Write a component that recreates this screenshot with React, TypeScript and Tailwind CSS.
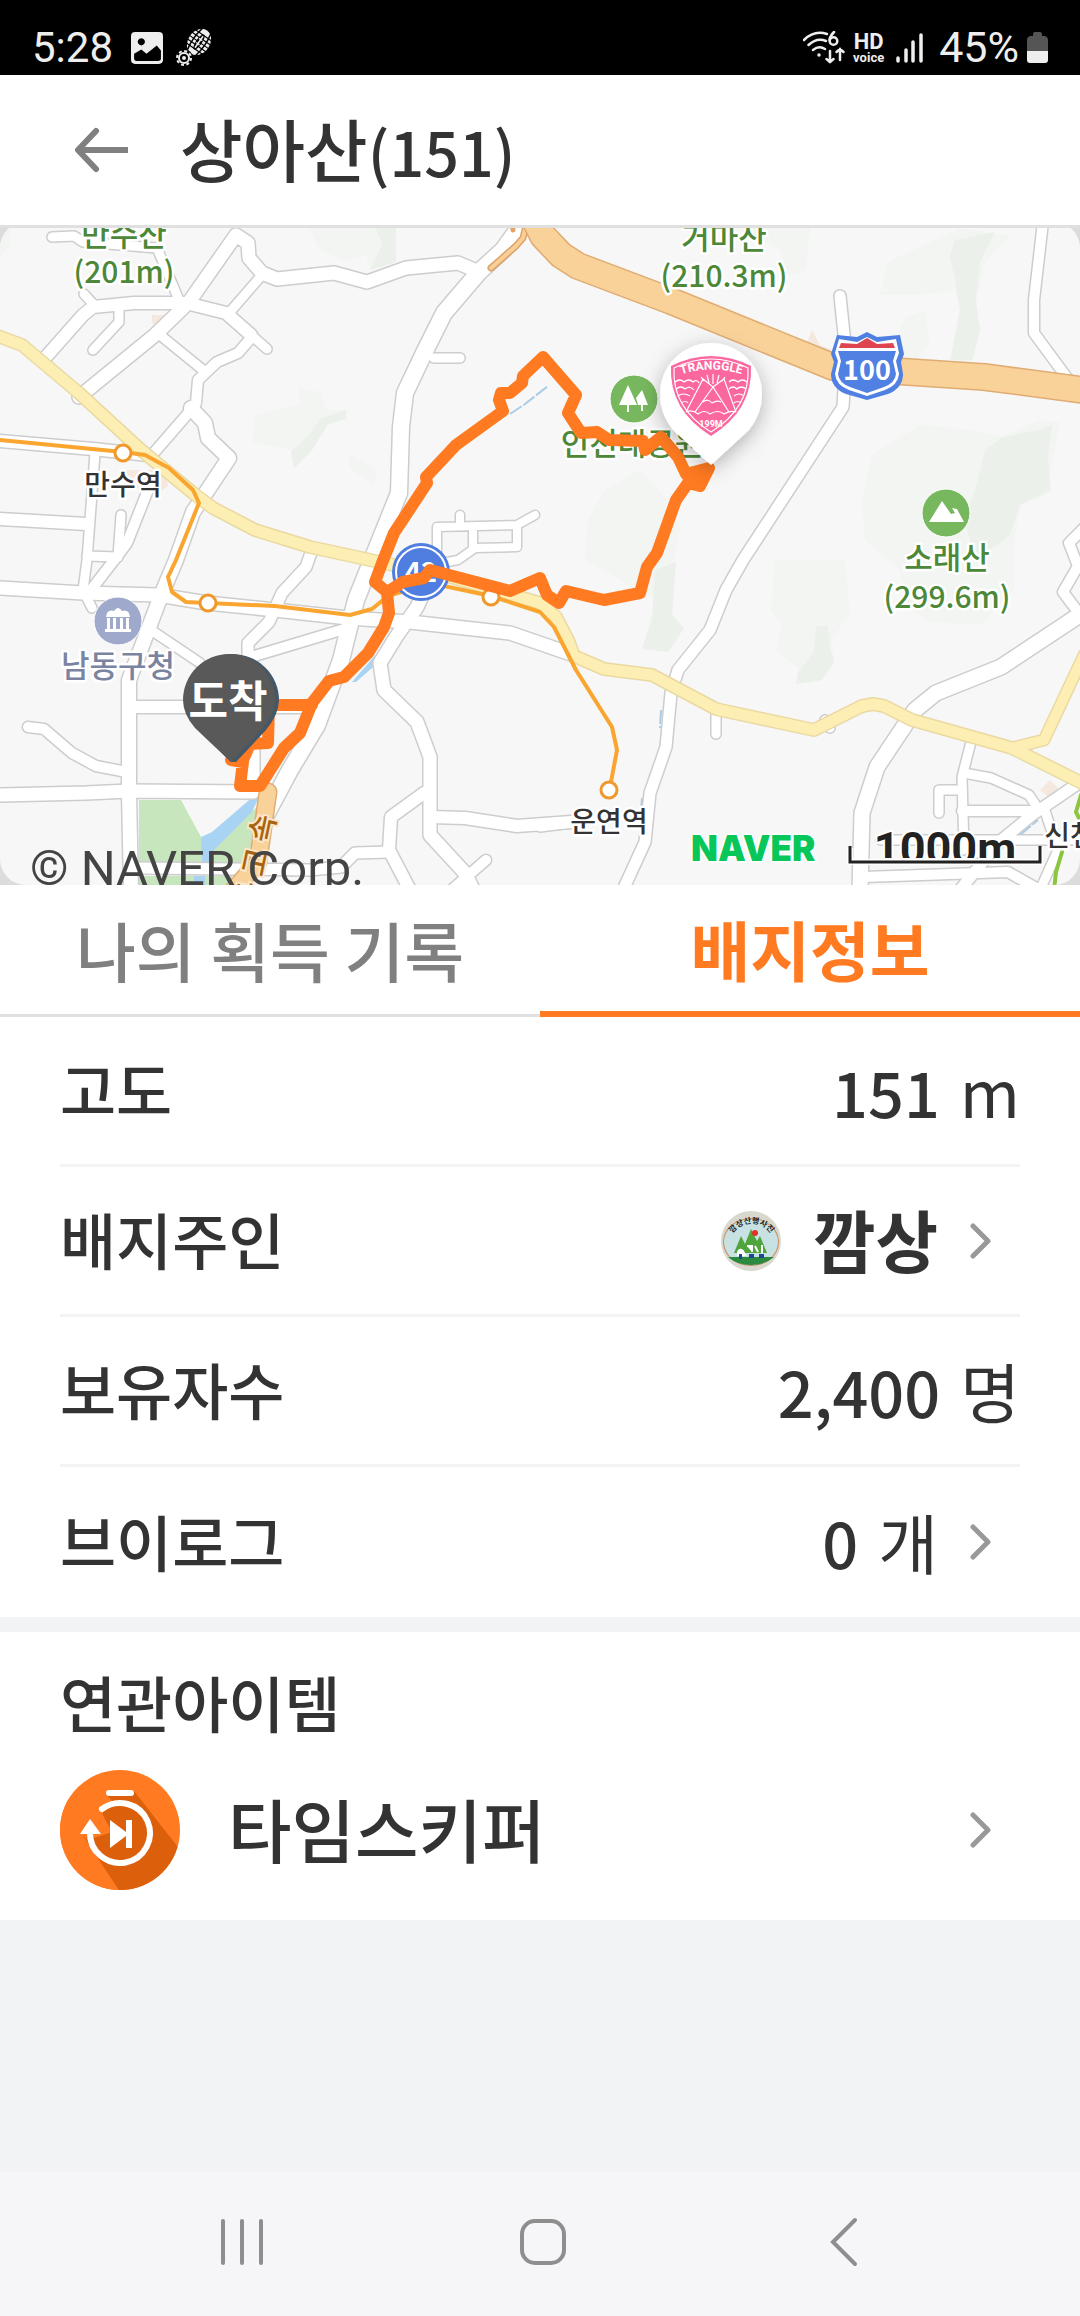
import type { ReactNode } from 'react';

type Road = { d: string; w: number };

const roads: Road[] = [
  { d: 'M52 237 L74 236 L83 242 L157 248 L179 300', w: 9 },
  { d: 'M84 294 L96 307', w: 9 },
  { d: 'M45 358 L83 315 L93 307 L134 303 L186 303 L226 313 L251 335', w: 12 },
  { d: 'M226 313 L267 349', w: 9 },
  { d: 'M79 397 L155 335 L189 302 L236 235 L248 243 L249 258 L262 273 L277 279 L334 273 L367 282 L406 268 L458 263 L479 272', w: 13 },
  { d: 'M262 275 L229 313', w: 9 },
  { d: 'M93 350 L119 322 L119 310', w: 9 },
  { d: 'M160 335 L203 370', w: 9 },
  { d: 'M251 338 L238 353 L217 362 L198 380 L196 403 L191 410 L152 455', w: 10 },
  { d: 'M191 408 L205 423 L208 438 L229 458 L193 512 L176 560 L162 593 L148 630 L129 680 L129 793 L131 890', w: 14 },
  { d: 'M434 358 L460 358', w: 9 },
  { d: 'M0 441 L93 449 L148 455', w: 12 },
  { d: 'M0 519 L86 524', w: 12 },
  { d: 'M95 453 L87 560 L83 590 L92 608', w: 9 },
  { d: 'M148 490 L127 543 L115 559 L91 590', w: 10 },
  { d: 'M121 515 L118 557 L87 556', w: 9 },
  { d: 'M0 588 L83 593 L158 595 L207 603 L275 610 L348 618 L410 622 L510 633 L571 654', w: 13 },
  { d: 'M312 550 L306 567 L282 593 L269 622 L248 643 L248 660', w: 11 },
  { d: 'M151 630 L200 663', w: 9 },
  { d: 'M251 657 L341 630', w: 10 },
  { d: 'M131 707 L307 707', w: 12 },
  { d: 'M28 727 L44 729 L72 753 L96 766 L127 772', w: 10 },
  { d: 'M0 795 L86 793 L129 791 L253 792 L253 740', w: 13 },
  { d: 'M424 592 L417 607 L396 637 L380 663 L384 690 L417 722 L430 757 L430 835 L465 873 L476 895', w: 13 },
  { d: 'M424 793 L391 817 L389 850 L410 890', w: 12 },
  { d: 'M430 817 L465 818 L517 826 L571 822', w: 12 },
  { d: 'M486 860 L440 900', w: 10 },
  { d: 'M389 852 L355 853 L341 867 L310 870 L138 868', w: 11 },
  { d: 'M437 560 L437 527 L517 525 L535 515 M517 525 L517 547 L475 548 L458 560 L437 564 M473 530 L473 548 M460 525 L460 515', w: 8 },
  { d: 'M523 222 L503 250 L479 272 L444 313 L424 353 L405 393 L401 427 L399 493 L372 560 L356 600 L341 660 L317 725 L290 770 L266 815', w: 16 },
  { d: 'M840 296 L846 353 L843 407 L743 560 L726 590 L710 630 L678 670 L671 693 L666 747 L650 793 L645 842 L623 890', w: 11 },
  { d: 'M1043 222 L1034 300 L1034 333 L1076 390', w: 10 },
  { d: 'M1084 528 L1069 543 L1078 566 L1063 592 L1078 612', w: 10 },
  { d: 'M1084 612 L1001 667 L936 693 L915 710 L877 767 L862 813 L860 890', w: 15 },
  { d: 'M716 710 L716 734', w: 9 },
  { d: 'M825 720 L830 728', w: 9 },
  { d: 'M972 738 L962 777 L964 850', w: 9 },
  { d: 'M964 773 L991 778 L1029 795 L1039 810', w: 9 },
  { d: 'M939 813 L939 790 L962 790', w: 9 },
  { d: 'M962 811 L1038 811', w: 10 },
  { d: 'M1076 785 L1032 815 L998 843 L960 890', w: 11 },
  { d: 'M881 840 L1080 840', w: 9 },
  { d: 'M864 877 L1008 872 L1045 893', w: 10 },
  { d: 'M1044 808 L1058 850 L1040 890', w: 9 },
  { d: 'M571 822 L540 826', w: 11 },
];

const arterial =
  'M-5 335 L22 345 L79 393 L141 450 L193 493 L213 508 L255 530 L310 547 L375 561 L451 577 L540 603 L556 617 L568 640 L574 656 L604 669 L652 675 L716 709 L814 730 L862 706 L873 704 L884 706 L912 720 L1012 748 L1084 784';
const arterialBranch = 'M1012 748 L1044 740 L1084 655';
const expressway = 'M530 210 L543 236 L561 255 L578 266 L671 301 L833 367 L984 377 L1090 391';
const subway =
  'M0 440 L123 452 L145 455 L169 468 L193 490 L199 503 L176 560 L168 577 L172 592 L186 602 L275 606 L350 615 L372 609 L388 596 L430 583 L491 596 L540 612 L554 627 L576 670 L612 727 L617 750 L611 782';
const route =
  'M231 760 L243 762 L240 786 L260 786 L284 748 L300 733 L312 703 L329 681 L344 677 L368 653 L384 627 L389 613 L387 592 L375 582 L382 563 L394 533 L427 483 L426 477 L456 445 L503 411 L499 400 L501 393 L510 393 L522 383 L523 376 L543 357 L576 395 L568 413 L581 433 L597 432 L609 440 L643 441 L645 450 L661 437 L678 457 L686 474 L709 468 L700 486 L688 483 L676 500 L657 553 L647 567 L640 593 L604 600 L566 591 L559 603 L547 595 L540 578 L510 591 L430 570 L424 578 L403 582 L387 592 M312 705 L269 705 L268 743 L250 744 L243 760';

const stations: [number, number][] = [
  [123, 453],
  [208, 603],
  [491, 597],
  [609, 790],
];

function Label({ x, y, size = 30, color, children }: { x: number; y: number; size?: number; color: string; children: ReactNode }) {
  return (
    <text
      x={x}
      y={y}
      textAnchor="middle"
      fontSize={size}
      fill={color}
      stroke="#fff"
      strokeWidth={5}
      strokeLinejoin="round"
      paintOrder="stroke"
      className="font-['Noto_Sans_CJK_KR',sans-serif] font-medium"
    >
      {children}
    </text>
  );
}

function TrailMap() {
  return (
    <svg viewBox="0 228 1080 657" className="block w-full" role="img" aria-label="상아산 코스 지도">
      <defs>
        <clipPath id="mapClip">
          <rect x="0" y="222" width="1080" height="663" rx="26" />
        </clipPath>
        <clipPath id="scaleClip">
          <rect x="860" y="820" width="170" height="38" />
        </clipPath>
        <filter id="pinShadow" x="-50%" y="-50%" width="200%" height="200%">
          <feDropShadow dx="0" dy="5" stdDeviation="10" floodColor="#000" floodOpacity="0.28" />
        </filter>
      </defs>
      <rect x="0" y="228" width="1080" height="657" fill="#dcdcdc" />
      <g clipPath="url(#mapClip)">
        <rect x="0" y="222" width="1080" height="663" fill="#f7f7f7" />

        {/* forest shading */}
        <g fill="#f2f5f1">
          <path d="M0 222 H10 V245 L0 258Z M308 225 L395 225 L396 262 L370 270 L366 255 L345 262 L318 248Z" />
          <path d="M255 415 L300 405 L298 388 L320 392 L326 410 L346 410 L346 419 L328 424 L312 450 L294 468 L291 450 L252 442Z M348 454 L378 470 L372 484 L350 468Z" />
          <path d="M605 490 L640 470 L672 505 L680 530 L674 560 L672 620 L684 628 L668 652 L642 650 L655 600 L612 575 L585 560 L588 520Z" />
          <path d="M740 228 L810 228 L806 270 L788 276 L780 250Z M888 262 L960 228 L1010 236 L985 262 L976 300 L980 330 L972 365 L952 362 L960 310 L955 290 L920 295 L880 295Z M905 318 L925 310 L930 345 L912 364 L890 350Z" />
          <path d="M872 455 L920 425 L975 430 L1000 437 L1040 420 L1060 422 L1050 470 L1052 492 L1020 505 L1014 545 L1014 590 L980 625 L930 622 L905 605 L900 570 L865 540 L862 500Z" />
          <path d="M775 560 L845 560 L850 612 L832 640 L834 660 L822 680 L796 684 L800 670 L776 650 L782 625 L771 610Z" />
        </g>
        <g fill="#ebf0eb">
          <path d="M376 228 L396 228 L396 262 L370 270 L382 245Z M308 436 L320 419 L346 410 L346 419 L328 424 L312 450 L294 468 L291 452Z" />
          <path d="M955 240 L995 232 L980 262 L976 300 L980 330 L972 360 L950 360 L960 310 L955 280 L950 256Z" />
          <path d="M985 450 L1003 437 L1040 430 L1052 425 L1048 455 L1050 490 L1020 505 L1010 535 L975 560 L965 520 L978 480Z" />
          <path d="M655 570 L676 562 L672 615 L684 628 L668 652 L642 648 L652 620Z M816 626 h12 l2 22 l4 14 l-12 18 l-26 4 l2 -12 l16 -20Z" />
        </g>
        <g fill="#f5e8df">
          <path d="M152 315 h16 l-2 8 l-8 5 l-6 -5Z M122 470 L165 470 L168 486 L155 495 L130 486Z M798 350 L806 345 L812 330 L820 345 L832 350 L828 362Z M1040 790 L1050 780 L1058 788 L1050 798Z" />
        </g>

        {/* park and stream */}
        <path d="M139 800 H181 L201 837 L207 862 H139Z M258 806 L248 862 H213 L207 850Z M139 876 H232 V890 H139Z" fill="#c8e6be" />
        <path d="M263 788 L252 812 L214 850 L214 864 H202 L201 837 L212 832 L240 808Z M194 876 h11 v12 h-11Z M352 682 L378 652 L372 668 L356 682Z" fill="#a8d3f3" />
        <path d="M510 414 L525 404 L548 386 M661 710 l-1 18 M642 798 l-1 14 M1020 835 L1038 820" fill="none" stroke="#a8cdea" strokeWidth="2" strokeDasharray="14 2" />

        {/* local roads */}
        <g fill="none" strokeLinecap="round" strokeLinejoin="round">
          {roads.map((r) => (
            <path key={r.d} d={r.d} stroke="#cdcdcd" strokeWidth={r.w + 3} />
          ))}
          {roads.map((r) => (
            <path key={r.d} d={r.d} stroke="#fff" strokeWidth={r.w} />
          ))}
          <path d={arterialBranch} stroke="#ead9a2" strokeWidth="13" />
          <path d={arterial} stroke="#ead9a2" strokeWidth="14" />
          <path d={arterialBranch} stroke="#fdeeb3" strokeWidth="10" />
          <path d={arterial} stroke="#fdeeb3" strokeWidth="11" />
          <path d="M491 268 L516 246 L523 238 L530 210" stroke="#dba36a" strokeWidth="7" />
          <path d="M491 268 L516 246 L523 238 L530 210" stroke="#f9cf95" strokeWidth="4" />
          <path d="M512 222 L513 230" stroke="#e3a464" strokeWidth="5" />
          <path d={expressway} stroke="#e0ac72" strokeWidth="28" />
          <path d={expressway} stroke="#f9d29a" strokeWidth="25" />
          <path d="M268 792 L258 862 L232 892" stroke="#e0ac72" strokeWidth="19" />
          <path d="M268 792 L258 862 L232 892" stroke="#f9d29a" strokeWidth="16" />
          <path d={subway} stroke="#f9a530" strokeWidth="4" />
          <path d="M1081 795 L1076 812 L1082 824 M1062 852 L1056 872 L1054 890" stroke="#8cc63f" strokeWidth="4" />
        </g>
        {stations.map(([x, y]) => (
          <circle key={x} cx={x} cy={y} r="8" fill="#fff" stroke="#f0982c" strokeWidth="3" />
        ))}

        {/* national road 42 */}
        <circle cx="421" cy="572" r="29" fill="#4f7de0" />
        <circle cx="421" cy="572" r="25" fill="#4f7de0" stroke="#fff" strokeWidth="2" />
        <text x="421" y="582" textAnchor="middle" fontSize="27" fill="#fff" className="font-['Noto_Sans_CJK_KR',sans-serif] font-bold">
          42
        </text>

        {/* expressway 100 */}
        <path d="M867 332 L877 337 L900 335 L904 354 L901 362 L903 374 Q903 388 888 394 L867 400 L846 394 Q831 388 831 374 L834 362 L831 354 L837 335 L857 337Z" fill="#5080e2" />
        <path d="M867 337 L877 342 L896 339 L899 353 L896 361 L899 374 Q898 385 885 390 L867 396 L849 390 Q836 385 835 374 L838 361 L835 353 L839 339 L857 342Z" fill="#fff" />
        <path d="M867 338 L877 344 L893 343 L895 348 H839 L841 343 L857 344Z" fill="#df4550" />
        <path d="M838 351 H896 L893 361 L896 374 Q895 383 884 387 L867 393 L850 387 Q839 383 838 374 L841 361Z" fill="#5080e2" />
        <text x="867" y="380" textAnchor="middle" fontSize="27" fill="#fff" className="font-['Noto_Sans_CJK_KR',sans-serif] font-bold">
          100
        </text>

        {/* points of interest */}
        <g stroke="#fff" strokeWidth="1">
          <circle cx="634" cy="399" r="24" fill="#77b75d" />
          <circle cx="946" cy="513" r="24" fill="#77b75d" />
          <circle cx="118" cy="621" r="24" fill="#9ea9cc" />
        </g>
        <path d="M628 385 L637 405 H629 V412 H627 V405 H619Z M642 390 L648 405 H643 V411 H641 V405 H638 L636 398Z" fill="#fff" />
        <path d="M929 522 L942 501 L951 514 L955 513 L952 508 L957 509 L964 522Z" fill="#fff" />
        <path d="M106 617 Q107 609 114 611 Q118 605 122 611 Q129 609 130 617Z M107 618 h3 v11 h-3Z M113 618 h3 v11 h-3Z M120 618 h3 v11 h-3Z M126 618 h3 v11 h-3Z M105 629 h26 v3 h-26Z" fill="#fff" />

        <Label x={124} y={246} size={31} color="#4c8838">만수산</Label>
        <Label x={124} y={283} size={30} color="#4c8838">(201m)</Label>
        <Label x={724} y={249} size={31} color="#4c8838">거마산</Label>
        <Label x={724} y={287} size={30} color="#4c8838">(210.3m)</Label>
        <Label x={632} y={455} size={31} color="#4c8838">인천대공원</Label>
        <Label x={947} y={569} size={31} color="#4c8838">소래산</Label>
        <Label x={947} y={608} size={30} color="#4c8838">(299.6m)</Label>
        <Label x={123} y={495} size={28} color="#333">만수역</Label>
        <Label x={118} y={677} size={31} color="#7a839f">남동구청</Label>
        <Label x={609} y={832} size={28} color="#333">운연역</Label>
        <Label x={1083} y={846} size={28} color="#333">신천역</Label>
        <text
          transform="translate(276 817) rotate(-78)"
          textAnchor="end"
          fontSize="30"
          fill="#a8630f"
          stroke="#fbe6c8"
          strokeWidth="4"
          paintOrder="stroke"
          className="font-['Noto_Sans_CJK_KR',sans-serif] font-medium"
        >
          동 고 속
        </text>

        <path d={route} fill="none" stroke="#ff7a20" strokeWidth="12" strokeLinejoin="round" strokeLinecap="round" />
        <path d="M686 474 L709 468 L700 486 L688 483Z" fill="#ff7a20" />

        {/* finish pin */}
        <path d="M231 762 L198 730 Q185 714 185 700 A47 46 0 0 1 279 700 Q279 714 266 730 L236 762Z" fill="#455868" />
        <path d="M231 762 L195 728 Q183 714 183 700 A46 46 0 0 1 275 700 Q275 714 263 728Z" fill="#595959" />
        <text x="228" y="717" textAnchor="middle" fontSize="43" fill="#fff" className="font-['Noto_Sans_CJK_KR',sans-serif] font-bold">
          도착
        </text>

        {/* summit badge pin */}
        <path d="M711 465 L673 430 Q660 414 660 394 A51 51 0 0 1 762 394 Q762 414 749 430Z" fill="#fff" filter="url(#pinShadow)" />
        <path d="M671 366 Q711 346 751 366 Q753 410 711 436 Q669 410 671 366Z" fill="#fb68a0" />
        <g fill="none" stroke="#fff" strokeWidth="1.2">
          <path d="M674 368 Q711 350 748 368 Q750 408 711 432 Q672 408 674 368Z" />
          <path d="M686 412 L703 379 L713 387 L724 379 L736 412 M695 412 L713 387 L729 412 M703 402 q5 -4 9 1 q5 -3 9 -1 M686 412 q6 -3 12 2 q6 -5 12 0 q8 -5 14 0 q6 -4 12 -2" />
          <path d="M675 382 q5 -4 9 0 q5 -4 9 0 q4 -3 6 1 M676 389 q5 -4 9 0 q5 -4 9 1 M678 396 q5 -4 12 0 M681 403 q5 -3 7 0 M747 382 q-5 -4 -9 0 q-5 -4 -9 0 M746 389 q-5 -4 -9 0 q-4 -4 -8 0 M744 396 q-5 -4 -10 0 M741 403 q-4 -3 -7 0" />
          <path d="M713 374 v10 M707 375 l2 8 M719 375 l-2 8 M701 377 l3 4 M725 377 l-3 4" />
        </g>
        <path id="badgeArc" d="M679 375 Q711 364 744 375" fill="none" />
        <text fontSize="12" fill="#fff" className="font-['Roboto',sans-serif] font-bold">
          <textPath href="#badgeArc" startOffset="50%" textAnchor="middle">
            TRANGGLE
          </textPath>
        </text>
        <text x="711" y="427" textAnchor="middle" fontSize="9" fill="#fff" className="font-['Roboto',sans-serif] font-bold">
          199M
        </text>

        {/* attribution and scale */}
        <text x="30" y="885" fontSize="49" fill="#444" className="font-['Roboto',sans-serif]">
          © NAVER Corp.
        </text>
        <text x="691" y="861" fontSize="35" fill="#08c75a" stroke="#fff" strokeWidth="3" paintOrder="stroke" className="font-['Inter',sans-serif] font-black">
          NAVER
        </text>
        <path d="M850 848 V862 H1040 V848" fill="none" stroke="#fff" strokeWidth="6" />
        <g clipPath="url(#scaleClip)">
          <text x="945" y="864" textAnchor="middle" fontSize="45" fill="#222" stroke="#fff" strokeWidth="4" paintOrder="stroke" className="font-['Roboto',sans-serif] font-bold">
            1000m
          </text>
        </g>
        <path d="M850 846 V862 H1040 V846" fill="none" stroke="#222" strokeWidth="3" />
      </g>
    </svg>
  );
}

function StatusBar() {
  return (
    <div className="flex h-[75px] items-center bg-black px-8 pt-5 font-['Roboto',sans-serif] text-[#eeeeee]">
      <span className="text-[42px] leading-none">5:28</span>
      <svg viewBox="0 0 31 31" className="ml-[18px] h-8 w-8">
        <path fillRule="evenodd" fill="#eee" d="M4 0H27Q31 0 31 4V27Q31 31 27 31H4Q0 31 0 27V4Q0 0 4 0Z M10 6a3.5 3.5 0 1 0 .01 0Z M3 21L10 17L15 21L25 13L29 18V26Q29 28 26 28H5Q3 28 3 26Z" />
      </svg>
      <svg viewBox="0 0 38 38" className="ml-3 h-[38px] w-[38px]">
        <g transform="rotate(35 24 13)">
          <ellipse cx="24" cy="13" rx="11" ry="14" fill="#eee" />
          <path d="M19 0Q16 13 19 26 M29 0Q32 13 29 26" stroke="#000" strokeWidth="1.5" fill="none" />
          <path d="M12 5H36 M12 9H36 M12 13H36 M12 17H36 M12 21H36" stroke="#000" strokeWidth="1.2" />
          <ellipse cx="24" cy="13" rx="3" ry="9" fill="#000" />
          <path d="M24 6V20 M22 10h4 M22 15h4" stroke="#eee" strokeWidth="1.5" />
        </g>
        <circle cx="9" cy="29" r="9" fill="#000" />
        <circle cx="9" cy="29" r="5" fill="none" stroke="#eee" strokeWidth="2" />
        <circle cx="9" cy="29" r="7" fill="none" stroke="#eee" strokeWidth="2" strokeDasharray="3 2.5" />
        <circle cx="9" cy="29" r="2" fill="#eee" />
      </svg>
      <svg viewBox="0 0 42 34" className="ml-auto h-[34px] w-[42px]" fill="none" stroke="#eee" strokeWidth="2.5" strokeLinecap="round">
        <path d="M1 9Q11 -1 24 3 M5.500 14Q14 6 23 10 M10 19Q16 14 22 18" />
        <circle cx="16" cy="24" r="1" fill="#eee" strokeWidth="1.500" />
        <path d="M31 1Q27 5 26.500 9" />
        <circle cx="30.500" cy="10" r="3.800" />
        <path d="M27 20V31 M23.500 28L27 31L30.500 28 M37 29V18 M33.500 21L37 18L40.500 21" />
      </svg>
      <div className="ml-2 flex flex-col items-center font-bold">
        <span className="text-[22px] leading-[19px]">HD</span>
        <span className="text-[13px] leading-[13px]">voice</span>
      </div>
      <svg viewBox="0 0 27 30" className="ml-3 h-[30px] w-[27px]" stroke="#eee" strokeWidth="3.500" strokeLinecap="round">
        <path d="M2 25V28 M10 17V28 M17 9V28 M25 2V28" />
      </svg>
      <span className="ml-4 text-[43px] leading-none">45%</span>
      <svg viewBox="0 0 21 31" className="ml-2 h-[31px] w-[21px]">
        <path d="M6 2Q6 0 8 0H13Q15 0 15 2V4H18Q21 5 21 8V20H0V8Q0 5 3 4H6Z" fill="#555" />
        <path d="M0 19H21V28Q21 31 18 31H3Q0 31 0 28Z" fill="#eee" />
      </svg>
    </div>
  );
}

function Chevron() {
  return (
    <svg viewBox="0 0 22 38" className="mr-7 h-[38px] w-[22px] shrink-0" fill="none" stroke="#999" strokeWidth="5" strokeLinecap="round" strokeLinejoin="round">
      <path d="M3 4L18 19L3 34" />
    </svg>
  );
}

function Avatar() {
  return (
    <svg viewBox="0 0 60 60" className="h-[60px] w-[60px]" role="img" aria-label="프로필 사진">
      <circle cx="30" cy="30" r="30" fill="#d9d8cf" />
      <ellipse cx="30" cy="31" rx="28" ry="24" fill="#c98f62" />
      <ellipse cx="30" cy="31" rx="27" ry="23" fill="#c8e2e3" />
      <path d="M13 42L20 25L24 33L30 18L36 30L39 25L46 42Z" fill="#4fa53c" />
      <path d="M7 46H53Q44 54 30 54Q16 54 7 46Z" fill="#2b8a3d" />
      <circle cx="34" cy="22" r="3" fill="#e03226" />
      <path d="M17 41q2 -4 5 -1l2 4h-7Z M26 35h5v6 M34 35l3 6 M41 34v8" fill="#fff" stroke="#fff" strokeWidth="2" />
      <path d="M18 43h3v5h-3Z M28 43h5v4h-5Z M38 43h5v4h-5Z" fill="#1c4796" />
      <path id="avatarArc" d="M9 31A21 18 0 0 1 52 31" fill="none" />
      <text fontSize="8" fill="#222" className="font-['Noto_Sans_CJK_KR',sans-serif] font-bold">
        <textPath href="#avatarArc" startOffset="50%" textAnchor="middle">
          깜상산행사진
        </textPath>
      </text>
    </svg>
  );
}

function TimeSkipperIcon() {
  return (
    <svg viewBox="0 0 120 120" className="h-[120px] w-[120px] shrink-0">
      <defs>
        <clipPath id="disc">
          <circle cx="60" cy="60" r="60" />
        </clipPath>
      </defs>
      <g clipPath="url(#disc)">
        <rect width="120" height="120" fill="#ff7a20" />
        <path d="M46 24L74 21L125 86V125H62L22 64L40 60Z" fill="#dc600c" />
        <path d="M46 24L52 31L40 40L52 62L28 70L20 63L60 122L0 122V30Z" fill="#ff7a20" />
      </g>
      <path d="M49 23H71" stroke="#fff" strokeWidth="6" strokeLinecap="round" />
      <path d="M42 39A30 30 0 1 1 30 62" fill="none" stroke="#fff" strokeWidth="6" strokeLinecap="round" />
      <path d="M30 49L41 64H20Z M50 50L66 62V50H72V78H66V66L50 78Z" fill="#fff" />
    </svg>
  );
}

function Row({ label, last, children }: { label: string; last?: boolean; children: ReactNode }) {
  return (
    <div className={last ? 'flex h-[150px] items-center justify-between' : 'flex h-[150px] items-center justify-between border-b-[3px] border-[#f2f3f5]'}>
      <dt className="pb-1 text-[61px] font-medium leading-none">{label}</dt>
      <dd className="flex items-center text-[68px] leading-none">{children}</dd>
    </div>
  );
}

function Amount({ value, unit }: { value: string; unit: string }) {
  return (
    <span className="pb-1">
      <strong className="text-[63px] font-medium">{value}</strong>
      <span className="ml-5 text-[65px]">{unit}</span>
    </span>
  );
}

export default function App() {
  return (
    <div className="flex min-h-screen flex-col bg-[#f1f3f5] font-['Noto_Sans_CJK_KR',sans-serif] text-[#333333]">
      <StatusBar />
      <header className="flex h-[153px] items-center border-b-[3px] border-[#e0e0e0] bg-white">
        <button type="button" aria-label="뒤로" className="ml-[72px]">
          <svg viewBox="0 0 60 48" className="h-12 w-[60px]" fill="none" stroke="#808080" strokeWidth="6" strokeLinejoin="round">
            <path d="M5 24H56" />
            <path d="M24 5L6 24L24 43" strokeLinecap="round" />
          </svg>
        </button>
        <h1 className="ml-12 pb-1 text-[68px] font-medium leading-none">
          상아산<span className="text-[61px]">(151)</span>
        </h1>
      </header>

      <TrailMap />

      <div role="tablist" className="grid h-[132px] grid-cols-2 bg-white text-[65px] font-medium leading-none">
        <button type="button" role="tab" aria-selected="false" className="border-b-[3px] border-[#e0e0e0] text-[#808080]">
          나의 획득 기록
        </button>
        <button type="button" role="tab" aria-selected="true" className="border-b-[6px] border-[#ff7a20] font-bold text-[#ff7a20]">
          배지정보
        </button>
      </div>

      <dl className="bg-white px-[60px]">
        <Row label="고도">
          <Amount value="151" unit="m" />
        </Row>
        <Row label="배지주인">
          <Avatar />
          <a href="#owner" className="ml-8 flex items-center gap-8 font-bold">
            <span className="pb-1">깜상</span>
            <Chevron />
          </a>
        </Row>
        <Row label="보유자수">
          <Amount value="2,400" unit="명" />
        </Row>
        <Row label="브이로그" last>
          <a href="#vlog" className="flex items-center gap-8">
            <Amount value="0" unit="개" />
            <Chevron />
          </a>
        </Row>
      </dl>

      <section className="mt-[15px] bg-white px-[60px] pb-[30px] pt-9">
        <h2 className="text-[61px] font-medium leading-[68px]">연관아이템</h2>
        <a href="#time-skipper" className="mt-[34px] flex items-center">
          <TimeSkipperIcon />
          <span className="ml-12 pb-1 text-[69px] font-medium leading-none">타임스키퍼</span>
          <span className="ml-auto flex">
            <Chevron />
          </span>
        </a>
      </section>

      <nav className="mt-auto grid h-36 grid-cols-3 place-items-center bg-[#f6f6f9] pb-1 pl-[92px] pr-[86px]">
        <button type="button" aria-label="최근 앱">
          <svg viewBox="0 0 48 50" className="h-[50px] w-12" stroke="#8e8e8e" strokeWidth="4" strokeLinecap="round">
            <path d="M5 4V46 M24 4V46 M43 4V46" />
          </svg>
        </button>
        <button type="button" aria-label="홈">
          <svg viewBox="0 0 50 50" className="h-[50px] w-[50px]" fill="none" stroke="#8e8e8e" strokeWidth="4">
            <rect x="4" y="4" width="42" height="42" rx="13" />
          </svg>
        </button>
        <button type="button" aria-label="뒤로 가기">
          <svg viewBox="0 0 32 52" className="h-[52px] w-8" fill="none" stroke="#8e8e8e" strokeWidth="4" strokeLinecap="round">
            <path d="M27 4L5 26L27 48" />
          </svg>
        </button>
      </nav>
    </div>
  );
}
